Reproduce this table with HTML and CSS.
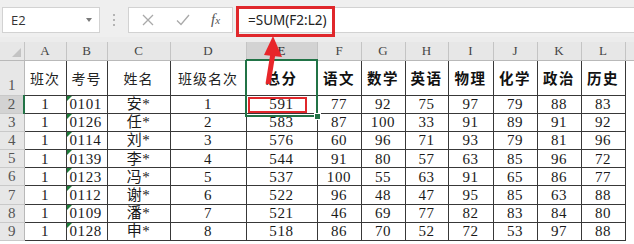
FILE: index.html
```html
<!DOCTYPE html>
<html lang="zh-CN">
<head>
<meta charset="utf-8">
<title>Sheet</title>
<link rel="stylesheet" href="styles.css">
</head>
<body>
<div class="app">
  <div class="fbar">
    <div class="namebox"><span class="ref">E2</span><span class="dd"></span></div>
    <div class="dots"><i></i><i></i><i></i></div>
    <div class="fbtns">
      <svg class="ico" width="12" height="12" viewBox="0 0 12 12"><path d="M1 1L11 11M11 1L1 11" stroke="#a9a9a9" stroke-width="1.3" fill="none"/></svg>
      <svg class="ico" width="14" height="12" viewBox="0 0 14 12"><path d="M1 6.5L5 10.5L13 1" stroke="#a9a9a9" stroke-width="1.3" fill="none"/></svg>
      <span class="fx">f<small>x</small></span>
    </div>
    <div class="finput"><span class="ftext">=SUM(F2:L2)</span></div>
  </div>
  <div class="gap"></div>
  <div class="sheet">
    <table class="grid">
      <colgroup>
        <col style="width:24px"><col style="width:42px"><col style="width:41px"><col style="width:63px"><col style="width:76px"><col style="width:71px"><col style="width:44px"><col style="width:44px"><col style="width:43px"><col style="width:45px"><col style="width:44px"><col style="width:44px"><col style="width:44px"><col style="width:9px">
      </colgroup>
      <tr class="colhdr">
        <th class="corner"><span class="tri"></span></th>
        <th>A</th><th>B</th><th>C</th><th>D</th><th class="selcol">E</th><th>F</th><th>G</th><th>H</th><th>I</th><th>J</th><th>K</th><th>L</th><th class="mcol"></th>
      </tr>
      <tr class="r1">
        <th class="rh">1</th>
        <td class="hd">班次</td><td class="hd">考号</td><td class="hd">姓名</td><td class="hd">班级名次</td>
        <td class="hd b">总分</td><td class="hd b">语文</td><td class="hd b">数学</td><td class="hd b">英语</td><td class="hd b">物理</td><td class="hd b">化学</td><td class="hd b">政治</td><td class="hd b">历史</td><td class="m"></td>
      </tr>
      <tr><th class="rh selrow">2</th><td>1</td><td class="txt">0101</td><td>安*</td><td>1</td><td class="mark">591<span class="redbox"></span></td><td>77</td><td>92</td><td>75</td><td>97</td><td>79</td><td>88</td><td>83</td><td class="m"></td></tr>
      <tr><th class="rh">3</th><td>1</td><td class="txt">0126</td><td>任*</td><td>2</td><td>583</td><td>87</td><td>100</td><td>33</td><td>91</td><td>89</td><td>91</td><td>92</td><td class="m"></td></tr>
      <tr><th class="rh">4</th><td>1</td><td class="txt">0114</td><td>刘*</td><td>3</td><td>576</td><td>60</td><td>96</td><td>71</td><td>93</td><td>79</td><td>81</td><td>96</td><td class="m"></td></tr>
      <tr><th class="rh">5</th><td>1</td><td class="txt">0139</td><td>李*</td><td>4</td><td>544</td><td>91</td><td>80</td><td>57</td><td>63</td><td>85</td><td>96</td><td>72</td><td class="m"></td></tr>
      <tr><th class="rh">6</th><td>1</td><td class="txt">0123</td><td>冯*</td><td>5</td><td>537</td><td>100</td><td>55</td><td>63</td><td>91</td><td>65</td><td>86</td><td>77</td><td class="m"></td></tr>
      <tr><th class="rh">7</th><td>1</td><td class="txt">0112</td><td>谢*</td><td>6</td><td>522</td><td>96</td><td>48</td><td>47</td><td>95</td><td>85</td><td>63</td><td>88</td><td class="m"></td></tr>
      <tr><th class="rh">8</th><td>1</td><td class="txt">0109</td><td>潘*</td><td>7</td><td>521</td><td>46</td><td>69</td><td>77</td><td>82</td><td>83</td><td>84</td><td>80</td><td class="m"></td></tr>
      <tr><th class="rh">9</th><td>1</td><td class="txt">0128</td><td>申*</td><td>8</td><td>518</td><td>86</td><td>70</td><td>52</td><td>72</td><td>53</td><td>97</td><td>88</td><td class="m"></td></tr>
    </table>
  </div>
  <div class="selbox"><span class="handle"></span></div>
  <div class="fbox"></div>
  <svg class="arrow" width="634" height="244" viewBox="0 0 634 244">
    <path d="M273.5 50 L268 84" stroke="#e8262a" stroke-width="5" fill="none"/>
    <polygon points="273,36 282,57 264,55" fill="#e8262a"/>
  </svg>
</div>
</body>
</html>
```

FILE: styles.css
```css
* { box-sizing: border-box; }
html, body { margin: 0; padding: 0; }
body {
  width: 634px;
  height: 244px;
  overflow: hidden;
  background: #ffffff;
  font-family: "Liberation Serif", "Noto Sans CJK SC", serif;
}
.app {
  position: relative;
  width: 634px;
  height: 244px;
  overflow: hidden;
}
.fbar {
  height: 37px;
  background: #efefef;
  display: flex;
  align-items: center;
  padding-left: 2px;
  padding-top: 2px;
}
.namebox {
  width: 98px;
  height: 26px;
  background: #fff;
  border: 1px solid #d2d2d2;
  display: flex;
  align-items: center;
  justify-content: space-between;
  padding: 0 7px 0 8px;
}
.ref {
  font-family: "Open Sans", "Noto Sans", sans-serif;
  font-size: 13px;
  color: #333;
}
.dd {
  width: 0;
  height: 0;
  border-left: 3.5px solid transparent;
  border-right: 3.5px solid transparent;
  border-top: 4px solid #7a7a7a;
}
.dots {
  width: 28px;
  display: flex;
  flex-direction: column;
  align-items: center;
  gap: 3px;
}
.dots i {
  display: block;
  width: 2px;
  height: 2px;
  background: #b4b4b4;
}
.fbtns {
  width: 105px;
  height: 26px;
  background: #fff;
  border: 1px solid #d2d2d2;
  display: flex;
  align-items: center;
  padding-left: 13px;
}
.fbtns .ico:nth-child(1) { margin-right: 22px; }
.fbtns .ico:nth-child(2) { margin-right: 21px; }
.fx {
  font-family: "Liberation Serif", serif;
  font-style: italic;
  font-size: 15px;
  color: #555;
  line-height: 1;
}
.fx small { font-size: 11px; }
.finput {
  flex: 1;
  margin-left: 3px;
  height: 26px;
  background: #fff;
  border: 1px solid #d2d2d2;
  border-right: none;
  display: flex;
  align-items: center;
  padding-left: 11px;
}
.ftext {
  font-family: "Noto Sans", sans-serif;
  font-size: 13.5px;
  color: #222;
}
.gap { height: 5px; background: #ececec; }

.grid {
  border-collapse: collapse;
  table-layout: fixed;
  width: 634px;
}
.grid th, .grid td {
  padding: 0;
  overflow: hidden;
  white-space: nowrap;
}
.colhdr th {
  height: 18px;
  background: #e7e7e7;
  border-right: 1px solid #c4c4c4;
  border-bottom: 1px solid #b9b9b9;
  font-weight: normal;
  font-size: 13px;
  color: #444;
  text-align: center;
  vertical-align: middle;
}
.colhdr th.corner { position: relative; }
.tri {
  position: absolute;
  right: 3px;
  bottom: 3px;
  width: 0;
  height: 0;
  border-left: 9px solid transparent;
  border-bottom: 9px solid #c3c3c3;
}
.colhdr th.selcol { background: #d3d3d3; color: #2c2c2c; border-bottom: 2px solid #217346; }
.colhdr th.mcol { border-right: none; }

.rh {
  background: #e7e7e7;
  border-right: 1px solid #b9b9b9;
  border-bottom: 1px solid #c9c9c9;
  font-weight: normal;
  font-size: 15px;
  color: #555;
  text-align: center;
}
.rh.selrow { background: #d3d3d3; border-right: 2px solid #217346; }
.r1 .rh { vertical-align: bottom; padding-bottom: 1px; }
.r1 { height: 35px; }
tr { height: 18.2px; }
.colhdr { height: 18px; }

.grid td {
  border: 1px solid #383838;
  text-align: center;
  vertical-align: middle;
  font-size: 15px;
  letter-spacing: 0.6px;
  color: #1a1a1a;
  line-height: 16px;
}
.grid td.hd {
  font-family: "Noto Sans CJK SC", sans-serif;
  font-size: 14px;
  letter-spacing: 1px;
  color: #222;
}
.grid td.hd.b {
  font-weight: 700;
  font-size: 14.5px;
  letter-spacing: 1.5px;
  color: #111;
}
.grid td.txt {
  text-align: left;
  padding-left: 3px;
  position: relative;
}
.grid td.txt::before {
  content: "";
  position: absolute;
  left: 0;
  top: 0;
  border-top: 5px solid #1e7b3a;
  border-right: 5px solid transparent;
}
.grid td.m {
  border: none;
  border-left: 1px solid #383838;
}
.grid td.mark { position: relative; }
.redbox {
  position: absolute;
  left: 1px;
  top: 1px;
  width: 59px;
  height: 16px;
  border: 2px solid #e0272b;
}
.selbox {
  position: absolute;
  left: 245px;
  top: 60px;
  width: 73px;
  height: 57px;
  border: 2px solid #217346;
  border-top: none;
}
.handle {
  position: absolute;
  right: -5px;
  bottom: -5px;
  width: 7px;
  height: 7px;
  background: #217346;
  border: 1px solid #fff;
}
.fbox {
  position: absolute;
  left: 236px;
  top: 6px;
  width: 99px;
  height: 31px;
  border: 3px solid #e0272b;
}
.arrow {
  position: absolute;
  left: 0;
  top: 0;
  pointer-events: none;
}
```
